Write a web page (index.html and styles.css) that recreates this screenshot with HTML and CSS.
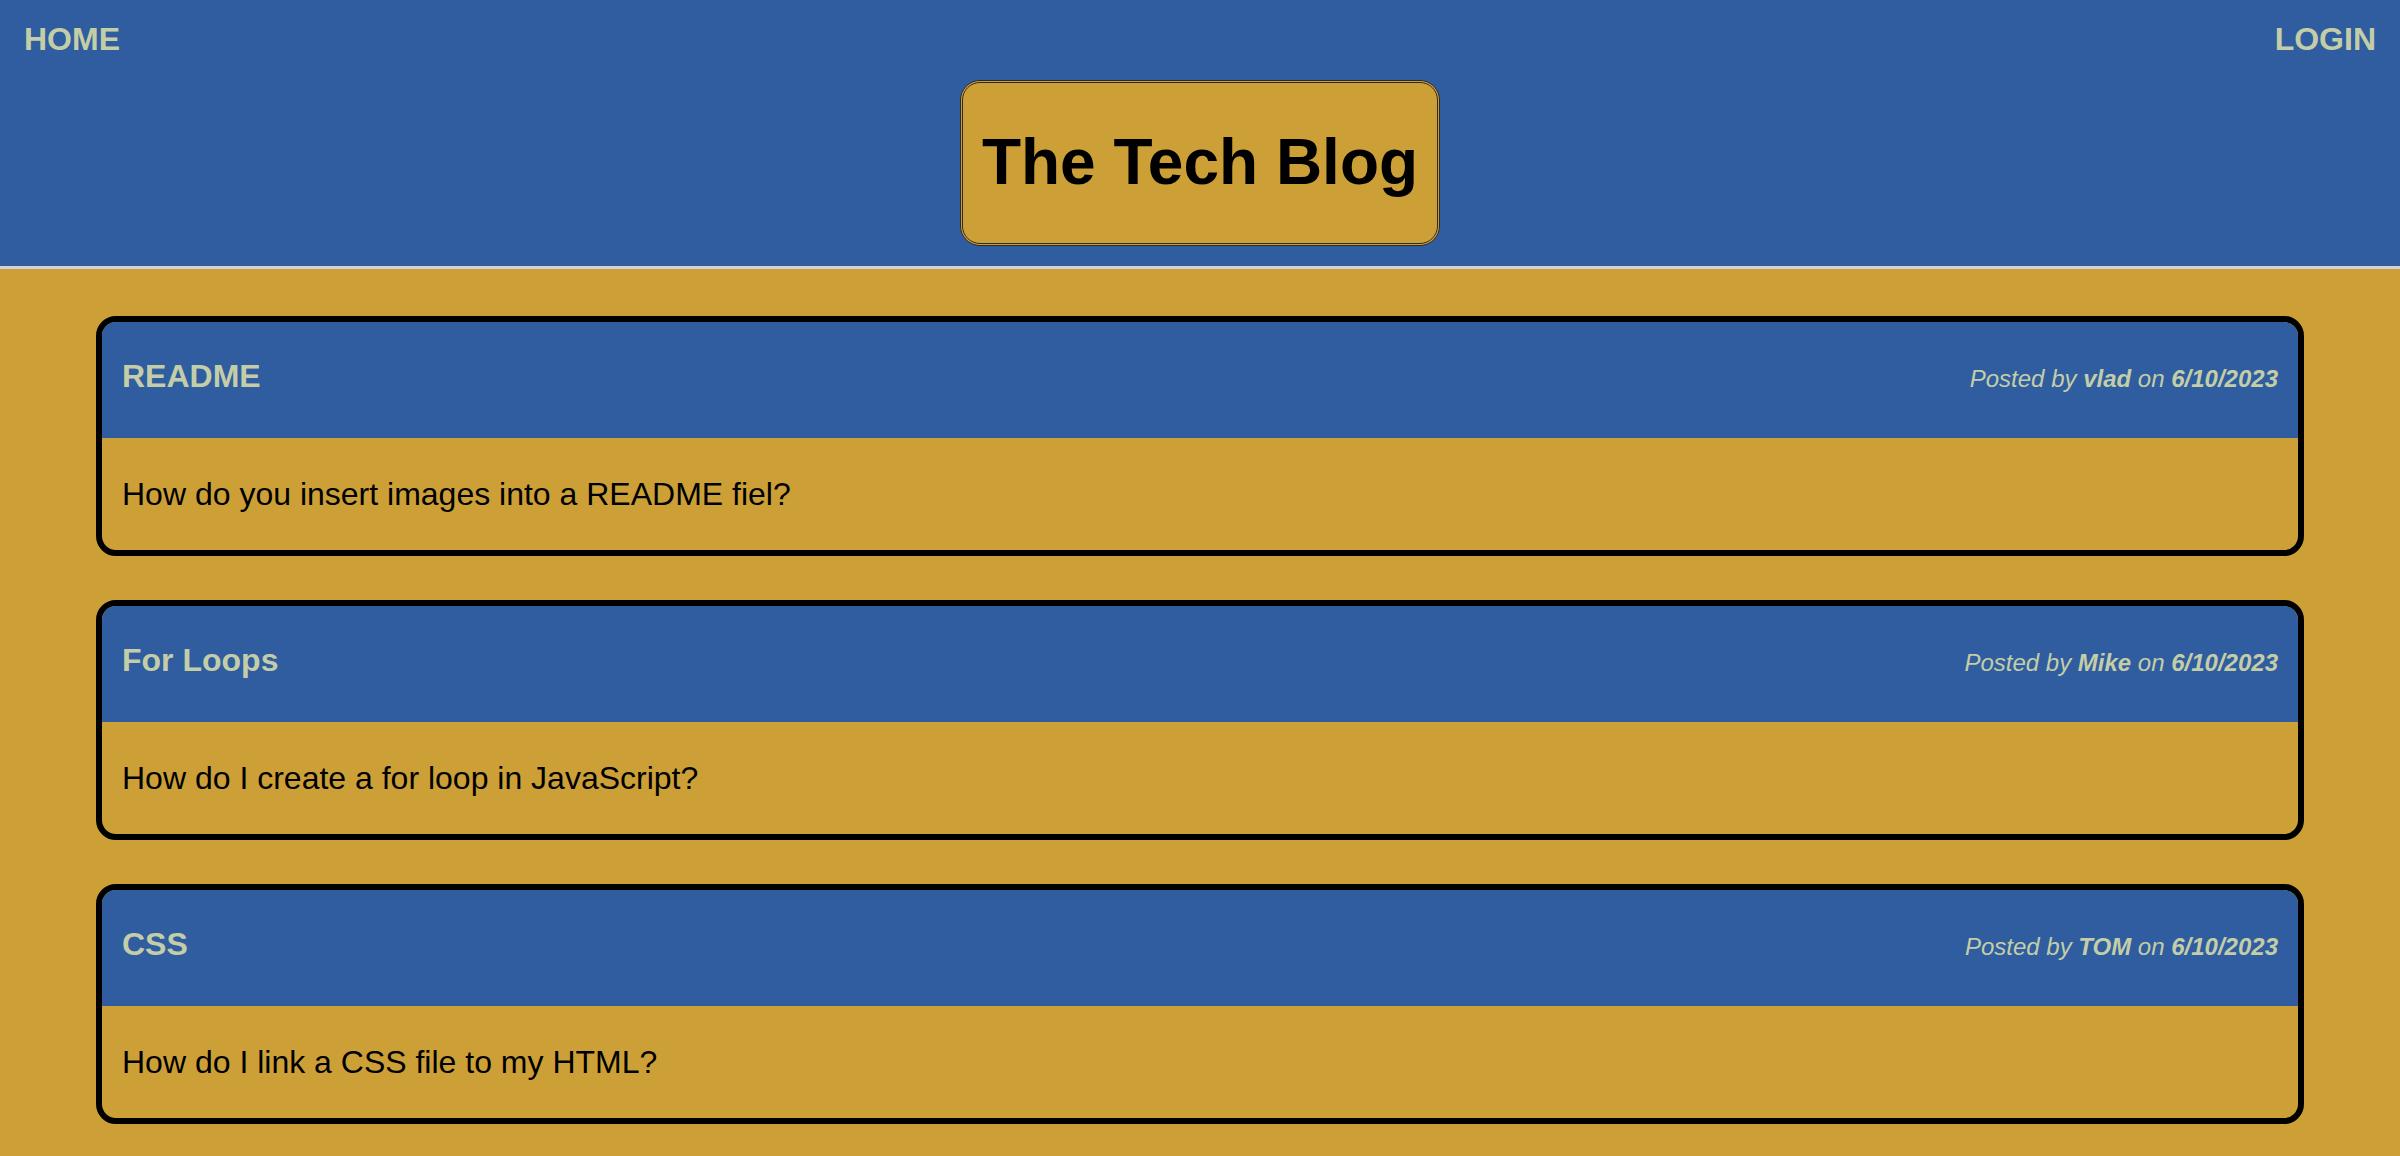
FILE: index.html
```html
<!DOCTYPE html>
<html lang="en">
<head>
<meta charset="utf-8">
<title>The Tech Blog</title>
<link rel="stylesheet" href="styles.css">
</head>
<body>
<header class="site-header">
  <nav class="nav">
    <a class="nav-link" href="#">HOME</a>
    <a class="nav-link" href="#">LOGIN</a>
  </nav>
  <div class="brand-wrap">
    <h1 class="brand">The Tech Blog</h1>
  </div>
</header>
<main class="posts">
  <article class="post">
    <div class="post-head">
      <h2 class="post-title">README</h2>
      <p class="post-meta">Posted by <b>vlad</b> on <b>6/10/2023</b></p>
    </div>
    <div class="post-body">How do you insert images into a README fiel?</div>
  </article>
  <article class="post">
    <div class="post-head">
      <h2 class="post-title">For Loops</h2>
      <p class="post-meta">Posted by <b>Mike</b> on <b>6/10/2023</b></p>
    </div>
    <div class="post-body">How do I create a for loop in JavaScript?</div>
  </article>
  <article class="post">
    <div class="post-head">
      <h2 class="post-title">CSS</h2>
      <p class="post-meta">Posted by <b>TOM</b> on <b>6/10/2023</b></p>
    </div>
    <div class="post-body">How do I link a CSS file to my HTML?</div>
  </article>
</main>
</body>
</html>
```
FILE: styles.css
```css
* { box-sizing: border-box; }

html, body {
  margin: 0;
  padding: 0;
}

body {
  background: #cca037;
  font-family: "Liberation Sans", Arial, Helvetica, sans-serif;
  color: #000;
}

.site-header {
  background: #2f5d9f;
  border-bottom: 3px solid #d3d3d3;
  padding: 21px 24px 20px;
}

.nav {
  display: flex;
  justify-content: space-between;
}

.nav-link {
  color: #c3cda8;
  font-size: 32px;
  font-weight: bold;
  text-decoration: none;
  line-height: 37px;
}

.brand-wrap {
  display: flex;
  justify-content: center;
  margin-top: 22px;
}

.brand {
  margin: 0;
  background: #cca037;
  border: 3px double #2a2a2a;
  border-radius: 20px;
  padding: 42px 19px 44px;
  font-size: 64px;
  font-weight: bold;
  line-height: 74px;
  color: #000;
}

.posts {
  padding: 47px 96px 33px;
  display: flex;
  flex-direction: column;
  gap: 44px;
}

.post {
  border: 6px solid #000;
  border-radius: 20px;
  overflow: hidden;
  background: #cca037;
}

.post-head {
  background: #2f5d9f;
  display: flex;
  justify-content: space-between;
  align-items: baseline;
  padding: 36px 20px 43px;
  height: 116px;
}

.post-title {
  margin: 0;
  color: #c3cda8;
  font-size: 32px;
  font-weight: bold;
  line-height: 37px;
}

.post-meta {
  margin: 0;
  color: #c3cda8;
  font-size: 24px;
  font-style: italic;
  line-height: 28px;
}

.post-meta b {
  font-weight: bold;
}

.post-body {
  padding: 38px 20px 37px;
  font-size: 32px;
  line-height: 37px;
  height: 112px;
}
```
